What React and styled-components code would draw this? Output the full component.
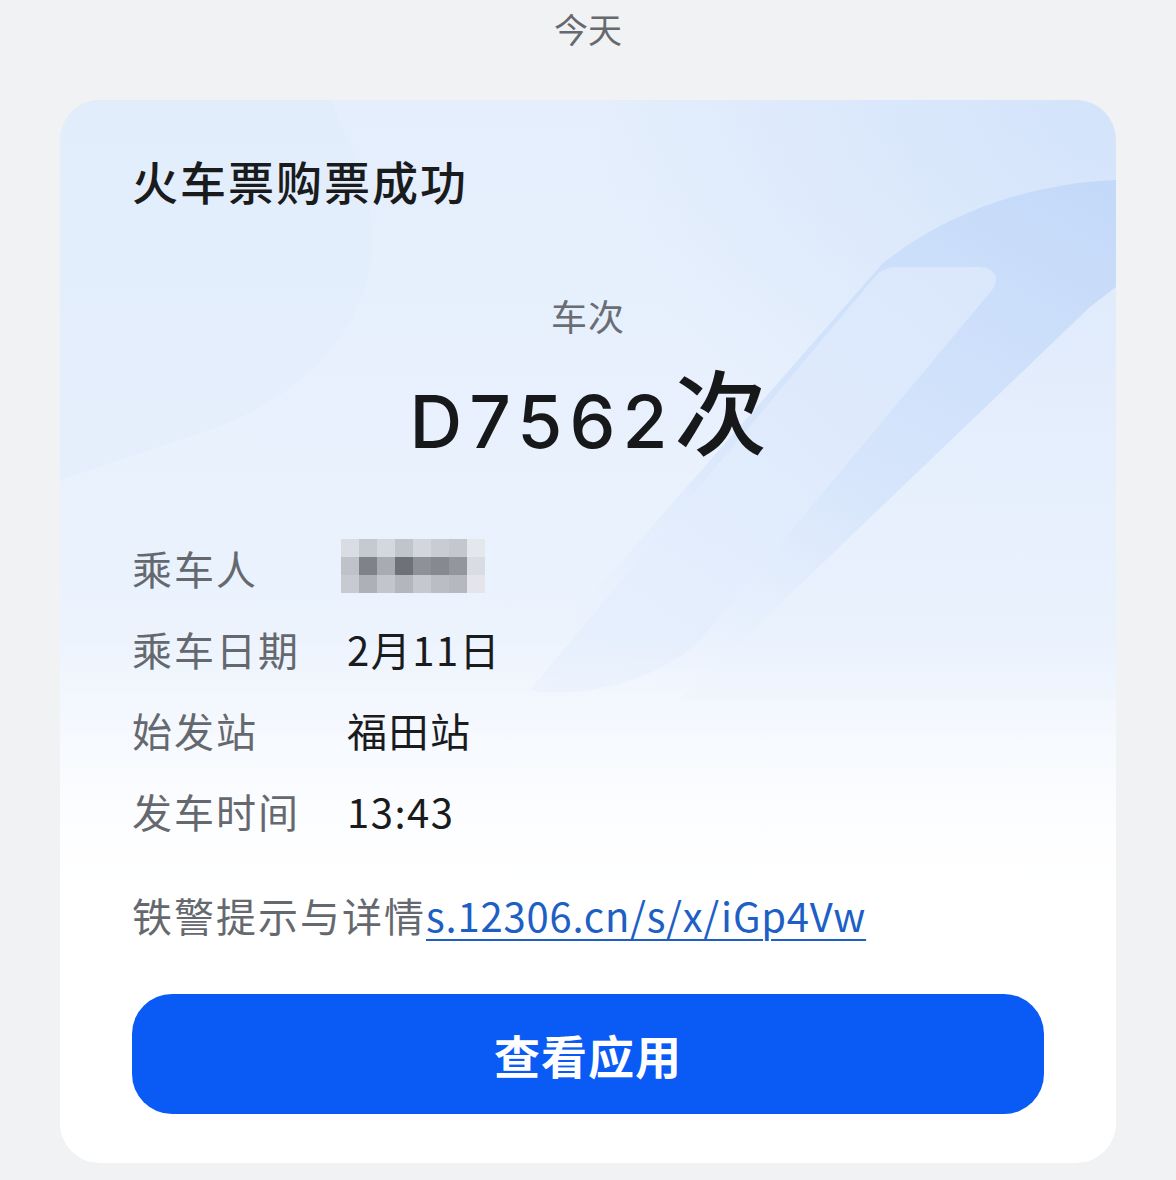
import React from "react";
import styled, { createGlobalStyle } from "styled-components";

const GlobalStyle = createGlobalStyle`
  html, body {
    margin: 0;
    padding: 0;
    background: #f1f2f4;
    font-family: "Noto Sans CJK SC", "Noto Sans", sans-serif;
  }
`;

const Page = styled.div`
  width: 1176px;
  min-height: 1180px;
  background: #f1f2f4;
  display: flex;
  flex-direction: column;
  align-items: center;
`;

const DayLabel = styled.div`
  height: 100px;
  line-height: 58px;
  font-size: 34px;
  color: #66696e;
`;

const Card = styled.div`
  position: relative;
  width: 1056px;
  box-sizing: border-box;
  padding: 52px 72px 49px;
  border-radius: 40px;
  overflow: hidden;
  background:
    radial-gradient(ellipse 520px 420px at 100% 0%, rgba(206, 224, 250, 0.8), rgba(206, 224, 250, 0) 100%),
    linear-gradient(180deg, #e4eefc 0%, #eaf2fd 45%, #f1f6fe 62%, #ffffff 78%);
`;

const Decor = styled.svg`
  position: absolute;
  left: 0;
  top: 0;
  width: 1056px;
  height: 1062px;
  pointer-events: none;
`;

const Content = styled.div`
  position: relative;
  display: flex;
  flex-direction: column;
`;

const Title = styled.div`
  font-size: 46px;
  line-height: 56px;
  font-weight: 500;
  color: #1a1b1d;
  letter-spacing: 2px;
`;

const TrainBlock = styled.div`
  display: flex;
  flex-direction: column;
  align-items: center;
  margin-top: 83px;
`;

const TrainCaption = styled.div`
  font-size: 36px;
  line-height: 48px;
  color: #6a6e74;
  letter-spacing: 1px;
`;

const TrainNo = styled.div`
  margin-top: 19px;
  height: 100px;
  line-height: 100px;
  font-family: "Inter", "Noto Sans CJK SC", sans-serif;
  font-size: 73px;
  font-weight: 500;
  color: #17181a;
  letter-spacing: 7px;
  white-space: nowrap;

  span {
    font-family: "Noto Sans CJK SC", sans-serif;
    font-size: 92px;
    letter-spacing: 0;
  }
`;

const InfoList = styled.div`
  margin-top: 69px;
  display: flex;
  flex-direction: column;
`;

const InfoRow = styled.div`
  display: grid;
  grid-template-columns: 215px 1fr;
  align-items: center;
  height: 81px;
  font-size: 40px;
`;

const Label = styled.div`
  color: #65696f;
  letter-spacing: 2px;
`;

const Value = styled.div`
  color: #1a1b1d;
  letter-spacing: 1.5px;
`;

const Mosaic = styled.div`
  display: grid;
  grid-template-columns: repeat(8, 18px);
  grid-auto-rows: 18px;
  width: 144px;
  margin-left: -6px;
  margin-top: -4px;
`;

const Cell = styled.div`
  background: ${(p) => p.$c};
`;

const LinkLine = styled.div`
  margin-top: 36px;
  font-size: 40px;
  line-height: 56px;
  color: #65696f;
  letter-spacing: 2px;
  white-space: nowrap;
`;

const LinkText = styled.a`
  color: #1d5fc4;
  letter-spacing: 0.8px;
  text-decoration: underline;
  text-decoration-thickness: 2px;
  text-underline-offset: 7px;
`;

const ActionButton = styled.button`
  margin-top: 51px;
  height: 120px;
  width: 100%;
  border: none;
  border-radius: 40px;
  background: #0a5af6;
  color: #ffffff;
  font-family: "Noto Sans CJK SC", sans-serif;
  font-size: 46px;
  font-weight: 700;
  letter-spacing: 1px;
  cursor: pointer;
`;

const mosaicColors = [
  "#d9dde3", "#c5cad1", "#d3d7de", "#c0c4cb", "#d3d6dc", "#c9ccd2", "#c4c7cd", "#e4e7ec",
  "#bfc3c9", "#7f8288", "#a8acb2", "#6e7278", "#8e9298", "#86898f", "#93969c", "#d9dce2",
  "#c7cad0", "#adb0b7", "#c2c5cb", "#b3b7bd", "#c5c8ce", "#babdc3", "#b5b8be", "#e3e5ea",
];

const rows = [
  { label: "乘车日期", value: "2月11日" },
  { label: "始发站", value: "福田站" },
  { label: "发车时间", value: "13:43" },
];

function CardDecor() {
  return (
    <Decor viewBox="0 0 1056 1062">
      <defs>
        <linearGradient id="fade" x1="0" y1="0" x2="0" y2="1">
          <stop offset="0" stopColor="#ffffff" stopOpacity="0" />
          <stop offset="0.5" stopColor="#ffffff" stopOpacity="0" />
          <stop offset="0.76" stopColor="#ffffff" stopOpacity="1" />
          <stop offset="1" stopColor="#ffffff" stopOpacity="1" />
        </linearGradient>
        <linearGradient id="band" x1="1" y1="0" x2="0.3" y2="1">
          <stop offset="0" stopColor="#c3d9f9" stopOpacity="1" />
          <stop offset="0.6" stopColor="#d3e3fb" stopOpacity="0.8" />
          <stop offset="1" stopColor="#e2ecfc" stopOpacity="0" />
        </linearGradient>
        <linearGradient id="seven" x1="1" y1="0" x2="0" y2="1">
          <stop offset="0" stopColor="#dde9fc" />
          <stop offset="1" stopColor="#e6effd" />
        </linearGradient>
        <linearGradient id="lower" x1="0" y1="0" x2="0" y2="1">
          <stop offset="0" stopColor="#e2ecfc" />
          <stop offset="1" stopColor="#e9f1fd" />
        </linearGradient>
      </defs>
      <path d="M0 0 L270 0 C300 60 320 120 310 170 C290 250 230 300 150 330 L0 380 Z" fill="#dfeafb" opacity="0.3" />
      <path d="M1056 80 C960 84 880 118 823 163 L440 600 L620 600 L1030 207 L1056 187 Z" fill="url(#band)" />
      <path d="M1056 187 L1030 207 L620 600 L1056 600 Z" fill="url(#lower)" opacity="0.6" />
      <path d="M836 167 L918 167 C934 167 941 178 932 190 L640 540 C600 580 520 600 470 590 L812 180 C819 172 826 167 836 167 Z" fill="url(#seven)" opacity="0.85" />
      <rect x="0" y="0" width="1056" height="1062" fill="url(#fade)" />
    </Decor>
  );
}

export default function App() {
  return (
    <Page>
      <GlobalStyle />
      <DayLabel>今天</DayLabel>
      <Card>
        <CardDecor />
        <Content>
          <Title>火车票购票成功</Title>
          <TrainBlock>
            <TrainCaption>车次</TrainCaption>
            <TrainNo>
              D7562<span>次</span>
            </TrainNo>
          </TrainBlock>
          <InfoList>
            <InfoRow>
              <Label>乘车人</Label>
              <Mosaic>
                {mosaicColors.map((c, i) => (
                  <Cell key={i} $c={c} />
                ))}
              </Mosaic>
            </InfoRow>
            {rows.map((r) => (
              <InfoRow key={r.label}>
                <Label>{r.label}</Label>
                <Value>{r.value}</Value>
              </InfoRow>
            ))}
          </InfoList>
          <LinkLine>
            铁警提示与详情<LinkText href="#">s.12306.cn/s/x/iGp4Vw</LinkText>
          </LinkLine>
          <ActionButton>查看应用</ActionButton>
        </Content>
      </Card>
    </Page>
  );
}
